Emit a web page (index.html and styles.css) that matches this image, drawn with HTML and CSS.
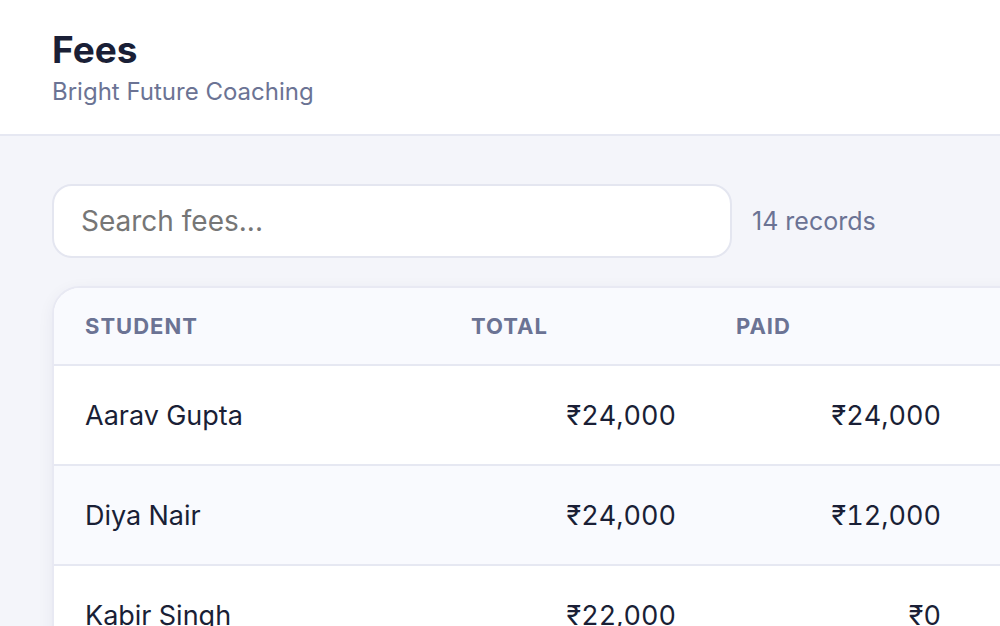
FILE: index.html
```html
<!DOCTYPE html>
<html lang="en">
<head>
    <meta charset="UTF-8">
    <meta name="viewport" content="width=device-width, initial-scale=1.0">
    <title>Fees</title>
    <link rel="stylesheet" href="styles.css">
</head>
<body>
    <div class="header">
        <h1>Fees</h1>
        <div class="subtitle">Bright Future Coaching</div>
    </div>

    <div class="main">
        <div class="search-bar">
            <input type="text" class="search-input" placeholder="Search fees...">
            <span class="record-count">14 records</span>
        </div>

        <div class="table-card">
            <table class="fee-table">
                <thead>
                    <tr>
                        <th class="col-student">Student</th>
                        <th class="col-amount">Total</th>
                        <th class="col-amount">Paid</th>
                        <th></th>
                    </tr>
                </thead>
                <tbody>
                    <tr>
                        <td>Aarav Gupta</td>
                        <td class="num">₹24,000</td>
                        <td class="num">₹24,000</td>
                        <td></td>
                    </tr>
                    <tr>
                        <td>Diya Nair</td>
                        <td class="num">₹24,000</td>
                        <td class="num">₹12,000</td>
                        <td></td>
                    </tr>
                    <tr>
                        <td>Kabir Singh</td>
                        <td class="num">₹22,000</td>
                        <td class="num">₹0</td>
                        <td></td>
                    </tr>
                </tbody>
            </table>
        </div>
    </div>
</body>
</html>
```

FILE: styles.css
```css
* {
    box-sizing: border-box;
    margin: 0;
    padding: 0;
}

html, body {
    overflow: hidden;
}

body {
    font-family: Inter, "Noto Sans", sans-serif;
    background-color: #f4f5fa;
    color: #1a1f36;
}

.header {
    background-color: #ffffff;
    padding: 28px 52px 25px;
    border-bottom: 2px solid #e6e8f2;
}

.header h1 {
    font-size: 37px;
    font-weight: 700;
    line-height: 44px;
    margin-bottom: 3px;
    color: #1a1f36;
}

.subtitle {
    font-size: 24px;
    line-height: 34px;
    color: #6b7394;
}

.main {
    padding: 48px 0 0 52px;
}

.search-bar {
    display: flex;
    align-items: center;
    gap: 20px;
    margin-bottom: 28px;
}

.search-input {
    width: 680px;
    height: 74px;
    padding: 0 27px;
    border: 2px solid #e4e6f0;
    border-radius: 20px;
    background-color: #ffffff;
    font-family: inherit;
    font-size: 28px;
    color: #1a1f36;
    outline: none;
}

.search-input::placeholder {
    color: #767676;
}

.record-count {
    font-size: 25px;
    color: #6b7394;
}

.table-card {
    width: 1100px;
    background-color: #ffffff;
    border: 2px solid #e8e9f3;
    border-radius: 28px;
    box-shadow: 0 4px 16px rgba(30, 40, 90, 0.06);
    overflow: hidden;
}

.fee-table {
    width: 100%;
    border-collapse: collapse;
    table-layout: fixed;
}

.fee-table th {
    height: 77px;
    padding: 0 31px;
    background-color: #f9fafe;
    border-bottom: 2px solid #e6e8f2;
    text-align: left;
    font-size: 22px;
    font-weight: 700;
    letter-spacing: 1px;
    text-transform: uppercase;
    color: #6b7394;
}

.col-student {
    width: 386px;
}

.col-amount {
    width: 265px;
}

.fee-table td {
    height: 100px;
    padding: 0 31px;
    border-bottom: 2px solid #e6e8f2;
    font-size: 27px;
    color: #1a1f36;
    font-variant-numeric: tabular-nums;
}

.fee-table tbody tr:nth-child(even) td {
    background-color: #f9fafe;
}

.fee-table td.num {
    text-align: right;
    padding-right: 29px;
}
```
